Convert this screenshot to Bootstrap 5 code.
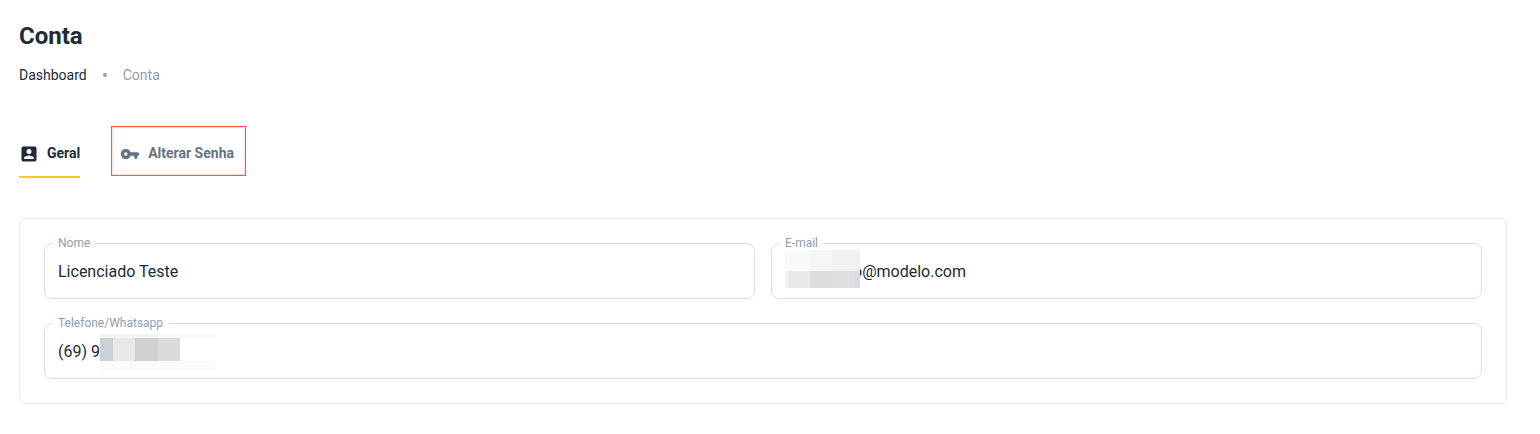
<!DOCTYPE html>
<html lang="pt-BR">
<head>
<meta charset="utf-8">
<meta name="viewport" content="width=device-width, initial-scale=1">
<title>Conta</title>
<link href="https://cdn.jsdelivr.net/npm/bootstrap@5.3.0/dist/css/bootstrap.min.css" rel="stylesheet">
<style>
  body { font-family: Roboto, "Liberation Sans", sans-serif; color: #212b36; background: #fff; }
  .page { padding: 20px 33px 30px 19px; }
  .page-title { font-size: 24px; line-height: 32px; font-weight: 700; margin-bottom: 12px; }
  .breadcrumb { --bs-breadcrumb-margin-bottom: 40px; font-size: 14px; line-height: 22px; gap: 16px; }
  .breadcrumb a { color: #212b36; }
  .breadcrumb .active { color: #919eab; }
  .crumb-dot { width: 4px; height: 4px; background: #919eab; }
  .account-tabs { gap: 31px; margin-bottom: 40px; }
  .account-tabs .nav-link { height: 52px; padding: 2px 0 0; gap: 8px; border: 0; border-radius: 0; background: none; font-size: 14px; line-height: 22px; font-weight: 700; color: #637381; transition: none; }
  .account-tabs .nav-link.active { color: #212b36; box-shadow: inset 0 -2px #f9cb1c; }
  .account-tabs .nav-link.marked { height: 50px; padding: 4px 11px 0 8px; border: 1px solid #fb5353; box-shadow: inset 0 0 0 1px #ffe0e0; }
  .account-tabs svg { margin-top: 2px; }
  .panel { padding: 24px; border: 1px solid #ebebed; border-radius: 6px; }
  .fields { --bs-gutter-x: 16px; --bs-gutter-y: 24px; }
  .field label { top: -9px; left: 9px; padding: 0 5px; font-size: 12px; line-height: 18px; color: #919eab; background: #fff; }
  .field .form-control { height: 56px; padding: 0 13px; border-color: #dce0e4; border-radius: 8px; font-size: 16px; line-height: 24px; color: #212b36; transition: none; }
  .field .after-mask { padding-left: 81px; }
  .mask-email { left: 14px; top: 7px; width: 75px; height: 38px; }
  .mask-phone { left: 56px; top: 11px; width: 115px; height: 36px; }
</style>
<script src="https://cdn.jsdelivr.net/npm/bootstrap@5.3.0/dist/js/bootstrap.bundle.min.js" defer></script>
</head>
<body>
<main class="page">
  <h1 class="page-title">Conta</h1>
  <nav aria-label="breadcrumb">
    <ol class="breadcrumb align-items-center">
      <li><a class="text-decoration-none" href="#">Dashboard</a></li>
      <li class="crumb-dot rounded-circle" aria-hidden="true"></li>
      <li class="active" aria-current="page">Conta</li>
    </ol>
  </nav>

  <div class="nav account-tabs" role="tablist">
    <button class="nav-link active d-flex align-items-center" type="button" role="tab" aria-selected="true">
      <svg width="20" height="20" viewBox="0 0 24 24" fill="currentColor" aria-hidden="true"><path fill-rule="evenodd" d="M5 3h14a2 2 0 0 1 2 2v14a2 2 0 0 1-2 2H5a2 2 0 0 1-2-2V5a2 2 0 0 1 2-2zm10 6a3 3 0 1 0-6 0 3 3 0 0 0 6 0zm-9 8v1h12v-1c0-2-4-3.100-6-3.100S6 15 6 17z"/></svg>
      Geral
    </button>
    <button class="nav-link marked d-flex align-items-center" type="button" role="tab" aria-selected="false">
      <svg width="20" height="20" viewBox="0 0 24 24" fill="currentColor" aria-hidden="true"><path fill-rule="evenodd" d="M12.650 10a5.990 5.990 0 0 0-6.880-3.880c-2.290.460-4.150 2.300-4.630 4.580A6.006 6.006 0 0 0 7 18a5.990 5.990 0 0 0 5.650-4H17v2c0 1.100.900 2 2 2s2-.900 2-2v-2c1.100 0 2-.900 2-2s-.900-2-2-2h-8.350zM7 14c-1.100 0-2-.900-2-2s.900-2 2-2 2 .900 2 2-.900 2-2 2z"/></svg>
      Alterar Senha
    </button>
  </div>

  <form class="panel">
    <div class="row fields">
      <div class="col-6">
        <div class="field position-relative">
          <input class="form-control" id="nome" type="text" value="Licenciado Teste">
          <label class="position-absolute" for="nome">Nome</label>
        </div>
      </div>
      <div class="col-6">
        <div class="field position-relative">
          <input class="form-control after-mask" id="email" type="text" value="o@modelo.com">
          <label class="position-absolute" for="email">E-mail</label>
          <svg class="mask-email position-absolute" viewBox="0 0 75 38" shape-rendering="crispEdges" aria-hidden="true">
            <path fill="#f8f9f9" d="M0 0h25v21H0z"/><path fill="#f5f5f6" d="M25 0h22v21H25z"/><path fill="#f1f1f1" d="M47 0h28v21H47z"/>
            <path fill="#f0f1f1" d="M0 21h3v17H0z"/><path fill="#e8e9e9" d="M3 21h22v17H3z"/><path fill="#dbdddf" d="M25 21h22v17H25z"/><path fill="#dedfe1" d="M47 21h22v17H47z"/><path fill="#d9dadd" d="M69 21h6v17h-6z"/>
          </svg>
        </div>
      </div>
      <div class="col-12">
        <div class="field position-relative">
          <input class="form-control" id="telefone" type="text" value="(69) 9">
          <label class="position-absolute" for="telefone">Telefone/Whatsapp</label>
          <svg class="mask-phone position-absolute" viewBox="0 0 115 36" shape-rendering="crispEdges" aria-hidden="true">
            <path fill="#fafafa" d="M0 0h115v4H0zM0 27h115v9H0z"/><path fill="#f4f4f4" d="M0 0h58v4H0z"/>
            <path fill="#cfd0d2" d="M0 4h13v23H0z"/><path fill="#e7e8e8" d="M13 4h22v23H13z"/><path fill="#cfd1d3" d="M35 4h23v23H35z"/><path fill="#dadcdc" d="M58 4h22v23H58z"/>
          </svg>
        </div>
      </div>
    </div>
  </form>
</main>
</body>
</html>
